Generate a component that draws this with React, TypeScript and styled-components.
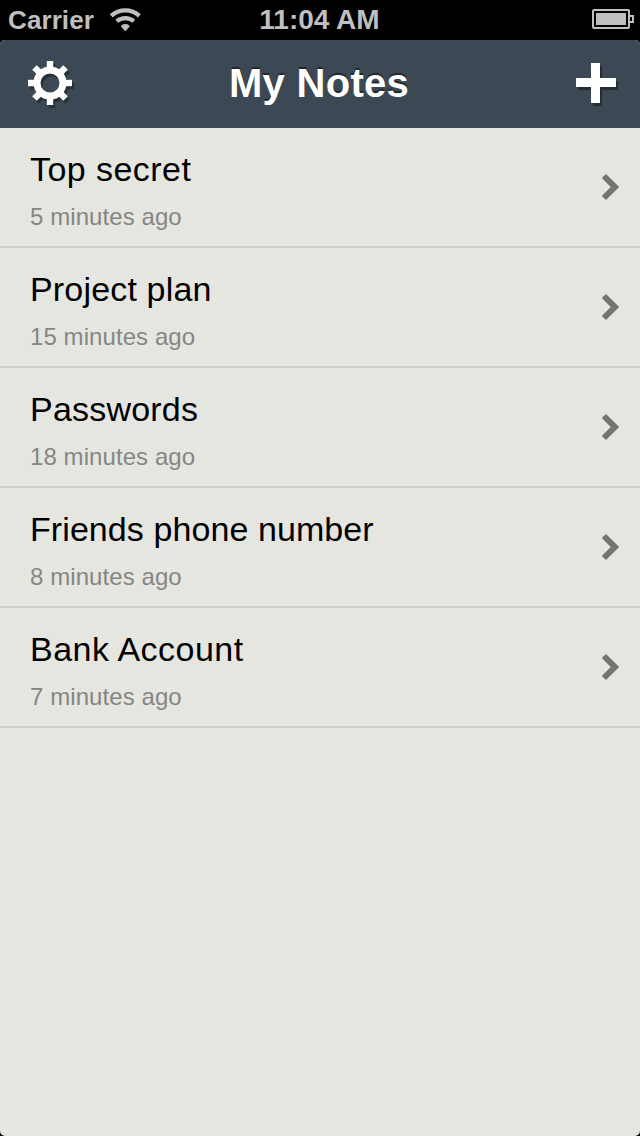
import React from "react";
import styled, { createGlobalStyle } from "styled-components";

const GlobalStyle = createGlobalStyle`
  body { margin: 0; background: #000; }
  * { box-sizing: border-box; }
`;

const Screen = styled.div`
  width: 640px;
  height: 1136px;
  display: flex;
  flex-direction: column;
  background: #000;
  overflow: hidden;
  font-family: "Liberation Sans", Arial, sans-serif;
`;

const StatusBar = styled.div`
  height: 40px;
  flex: none;
  display: grid;
  grid-template-columns: 1fr auto 1fr;
  align-items: center;
  padding: 0 9px 0 8px;
  color: #bfbfbf;
  font-weight: bold;
  line-height: 38px;
`;

const Signal = styled.div`
  display: flex;
  align-items: center;
  gap: 15.5px;
  svg { display: block; }
`;

const StatusText = styled.span<{ $size: number; $spacing?: number }>`
  font-size: ${(p) => p.$size}px;
  letter-spacing: ${(p) => p.$spacing ?? 0}px;
  white-space: pre;
`;

const Battery = styled.svg`
  display: block;
  justify-self: end;
  margin: 0 -3px 2px 0;
`;

const Panel = styled.div`
  flex: 1;
  display: flex;
  flex-direction: column;
  border-radius: 5px;
  overflow: hidden;
  background: #e5e6e0;
`;

const Header = styled.header`
  height: 88px;
  flex: none;
  display: grid;
  grid-template-columns: 76px 1fr 78px;
  align-items: center;
  background: #3c4955;
`;

const Heading = styled.h1`
  margin: 0;
  padding-bottom: 2px;
  text-align: center;
  font-size: 40px;
  line-height: 46px;
  letter-spacing: 0.3px;
  color: #fff;
  text-shadow: 0 -2px 0 #20272d;
`;

const IconButton = styled.button`
  border: 0;
  padding: 2px 0 0;
  background: none;
  display: flex;
  justify-self: end;
  svg { display: block; }
`;

const AddButton = styled(IconButton)`
  padding: 2px 20px 0 0;
`;

const List = styled.ul`
  list-style: none;
  margin: 0;
  padding: 0;
`;

const Row = styled.li`
  height: 120px;
  display: flex;
  align-items: center;
  justify-content: space-between;
  padding: 0 20px 0 30px;
  border-bottom: 2px solid #cccdc9;
`;

const NoteText = styled.div`
  display: flex;
  flex-direction: column;
  gap: 15px;
  padding-top: 7px;
`;

const NoteTitle = styled.span<{ $spacing: number }>`
  font-size: 34px;
  line-height: 38px;
  letter-spacing: ${(p) => p.$spacing}px;
  color: #000;
`;

const NoteTime = styled.span`
  font-size: 24px;
  line-height: 28px;
  letter-spacing: 0.08px;
  color: #858684;
`;

const WifiIcon = () => (
  <svg width="32" height="24" viewBox="0 0 32 24" fill="none" stroke="#bfbfbf">
    <path d="M2.25 7.8A21 21 0 0 1 30.35 7.8" strokeWidth="4.3" />
    <path d="M7.75 13.2A13.3 13.3 0 0 1 24.85 13.2" strokeWidth="4.1" />
    <path d="M16.3 23.3L12.2 18.8V17.4A7.5 7.5 0 0 1 20.4 17.4V18.8Z" fill="#bfbfbf" stroke="none" />
  </svg>
);

const GearShape = () => (
  <>
    <circle cx="22" cy="22" r="13" fill="none" strokeWidth="7" />
    {[0, 45, 90, 135, 180, 225, 270, 315].map((a) => (
      <rect key={a} x="18.8" y="0" width="6.4" height="9" stroke="none" transform={`rotate(${a} 22 22)`} />
    ))}
  </>
);

const GearIcon = () => (
  <svg width="48" height="48" viewBox="0 0 48 48">
    <g transform="translate(2 3)" fill="#27313a" stroke="#27313a"><GearShape /></g>
    <g fill="#fff" stroke="#fff"><GearShape /></g>
  </svg>
);

const PlusIcon = () => (
  <svg width="44" height="44" viewBox="0 0 44 44">
    <path d="M17 3h9v15h16v9H26v16h-9V27H2v-9h15z" fill="#252e36" />
    <path d="M15 0h9v15h16v9H24v16h-9V24H0v-9h15z" fill="#fff" />
  </svg>
);

const Chevron = () => (
  <svg width="18" height="26" viewBox="0 0 18 26">
    <path d="M4 0L17.2 13L4 26L-0.2 22L8.7 13L-0.2 4Z" fill="#747571" />
  </svg>
);

const notes = [
  { title: "Top secret", time: "5 minutes ago", titleSpacing: 0.45 },
  { title: "Project plan", time: "15 minutes ago", titleSpacing: 0.17 },
  { title: "Passwords", time: "18 minutes ago", titleSpacing: 0.2 },
  { title: "Friends phone number", time: "8 minutes ago", titleSpacing: 0.08 },
  { title: "Bank Account", time: "7 minutes ago", titleSpacing: 0.47 },
];

export default function App() {
  return (
    <>
      <GlobalStyle />
      <Screen>
        <StatusBar>
          <Signal>
            <StatusText $size={26} $spacing={0.1}>Carrier</StatusText>
            <WifiIcon />
          </Signal>
          <StatusText $size={28}>11:04 AM</StatusText>
          <Battery width="42" height="20" viewBox="0 0 42 20">
            <rect x="1" y="1" width="36" height="18" rx="1" fill="none" stroke="#bfbfbf" strokeWidth="2" />
            <rect x="4" y="4" width="30" height="12" fill="#bfbfbf" />
            <path d="M38 7h3v6h-3" fill="none" stroke="#bfbfbf" strokeWidth="2" />
          </Battery>
        </StatusBar>
        <Panel>
          <Header>
            <IconButton aria-label="Settings"><GearIcon /></IconButton>
            <Heading>My Notes</Heading>
            <AddButton aria-label="Add note"><PlusIcon /></AddButton>
          </Header>
          <List>
            {notes.map((n) => (
              <Row key={n.title}>
                <NoteText>
                  <NoteTitle $spacing={n.titleSpacing}>{n.title}</NoteTitle>
                  <NoteTime>{n.time}</NoteTime>
                </NoteText>
                <Chevron />
              </Row>
            ))}
          </List>
        </Panel>
      </Screen>
    </>
  );
}
